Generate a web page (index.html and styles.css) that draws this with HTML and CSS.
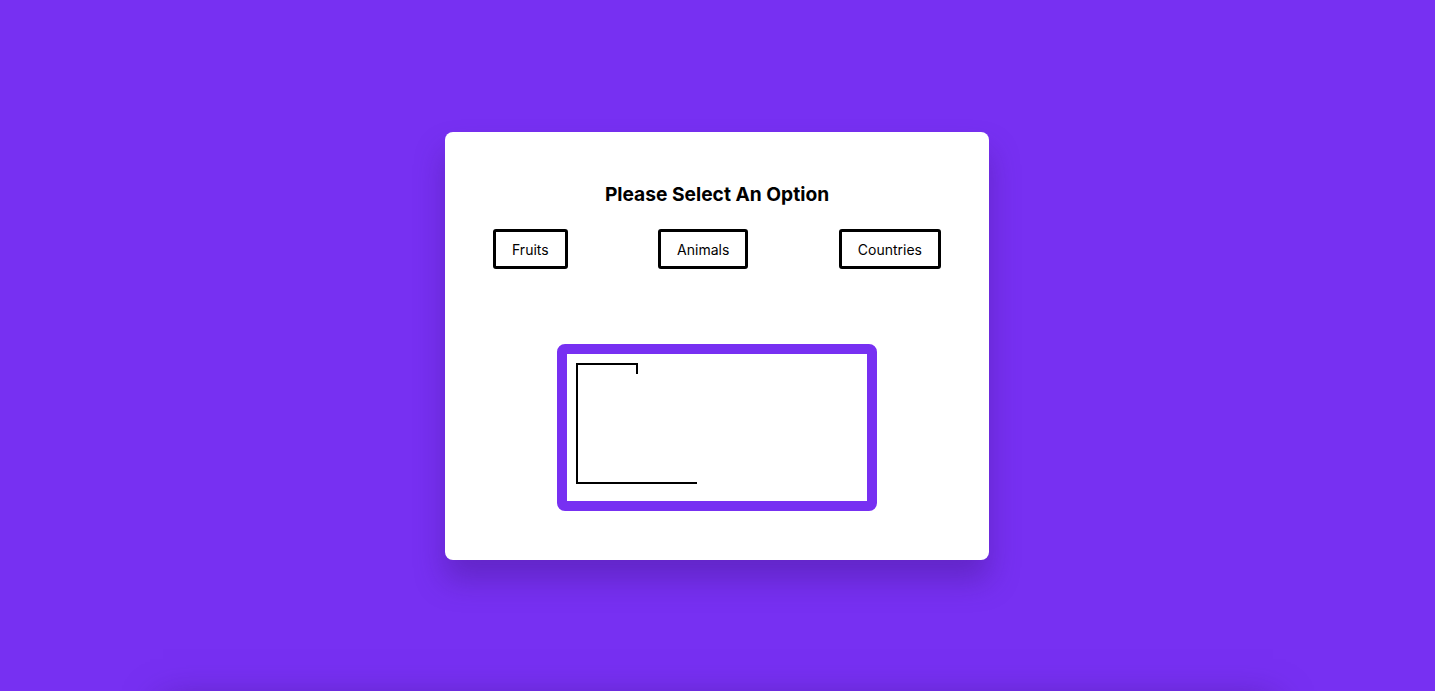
FILE: index.html
```html
<!DOCTYPE html>
<html>
<head>
  <title>Hangman</title>
  <meta name="viewport" content="width=device-width, initial-scale=1">
  <link rel="stylesheet" href="styles.css">
</head>
<body>

  <main class="screen">
    <div class="card">
      <h1 class="title">Please Select An Option</h1>

      <div class="options">
        <button class="option">Fruits</button>
        <button class="option">Animals</button>
        <button class="option">Countries</button>
      </div>

      <div class="board">
        <svg width="300" height="147" viewBox="0 0 300 147">
          <polyline points="70,20 70,10 10,10 10,129 130,129" fill="none" stroke="#000" stroke-width="2"/>
        </svg>
      </div>
    </div>
  </main>

  <section class="result">
  </section>

</body>
</html>
```

FILE: styles.css
```css
html, body {
  margin: 0;
  padding: 0;
}

body {
  background: #7730f2;
  font-family: Inter, "Noto Sans", sans-serif;
  color: #000;
}

.screen {
  height: 100vh;
  display: flex;
  align-items: center;
  justify-content: center;
  padding: 1px 1px 0 0;
  box-sizing: border-box;
}

.card {
  width: 544px;
  box-sizing: border-box;
  padding: 48px 48px 49px;
  background: #fff;
  border-radius: 8px;
  box-shadow: 0 20px 30px rgba(60, 20, 120, 0.35);
  display: flex;
  flex-direction: column;
  align-items: center;
}

.title {
  margin: 0;
  font-size: 19.2px;
  line-height: 28px;
  font-weight: 700;
}

.options {
  align-self: stretch;
  display: flex;
  justify-content: space-between;
  margin-top: 21px;
}

.option {
  height: 40px;
  padding: 0 16px;
  background: #fff;
  border: 3px solid #000;
  border-radius: 3px;
  font-family: inherit;
  font-size: 14px;
  color: #000;
}

.board {
  margin-top: 75px;
  border: 10px solid #7730f2;
  border-radius: 8px;
  display: flex;
}

.board svg {
  display: block;
}

.result {
  width: 1110px;
  height: 300px;
  margin: 2px auto 0;
  box-shadow: 0 10px 36px rgba(60, 20, 120, 0.6);
}
```
